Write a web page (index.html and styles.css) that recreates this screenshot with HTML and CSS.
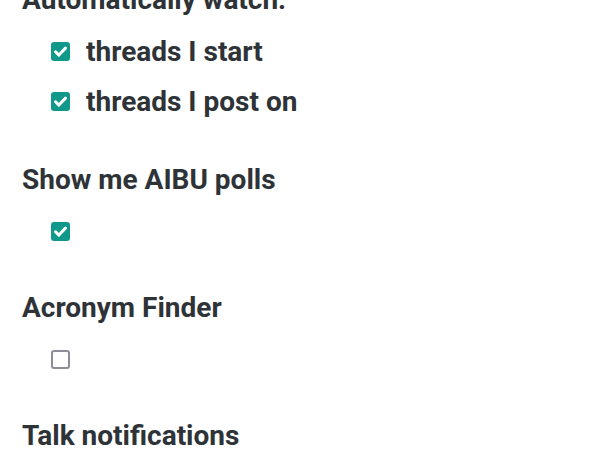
FILE: index.html
```html
<!DOCTYPE html>
<html lang="en">
<head>
  <meta charset="UTF-8">
  <meta name="viewport" content="width=device-width, initial-scale=1.0">
  <title>Preferences</title>
  <link rel="stylesheet" href="styles.css">
</head>
<body>
  <div class="prefs">
    <div class="pref">
      <h2 class="pref-title">Automatically watch:</h2>
      <label class="option">
        <input type="checkbox" checked>
        <span class="box"></span>
        <span class="option-text">threads I start</span>
      </label>
      <label class="option">
        <input type="checkbox" checked>
        <span class="box"></span>
        <span class="option-text">threads I post on</span>
      </label>
    </div>

    <div class="pref">
      <h2 class="pref-title">Show me AIBU polls</h2>
      <label class="option">
        <input type="checkbox" checked>
        <span class="box"></span>
      </label>
    </div>

    <div class="pref">
      <h2 class="pref-title">Acronym Finder</h2>
      <label class="option">
        <input type="checkbox">
        <span class="box"></span>
      </label>
    </div>

    <div class="pref">
      <h2 class="pref-title">Talk notifications</h2>
    </div>
  </div>
</body>
</html>
```

FILE: styles.css
```css
body {
  margin: 0;
  overflow: hidden;
  font-family: Roboto, "Liberation Sans", sans-serif;
  color: #2e3338;
  background: #fff;
}
.prefs {
  margin-top: -16px;
  padding: 0 22px;
}
.pref {
  margin-bottom: 36px;
}
.pref:first-child {
  margin-bottom: 38px;
}
.pref-title {
  margin: 0 0 10px;
  font-size: 28px;
  line-height: 32px;
  font-weight: 700;
}
.option {
  display: flex;
  align-items: center;
  gap: 16px;
  height: 50px;
  padding-left: 29px;
  font-size: 28px;
  font-weight: 700;
}
.option input {
  display: none;
}
.box {
  width: 19px;
  height: 19px;
  box-sizing: border-box;
  border: 2.5px solid #8e8c99;
  border-radius: 3px;
  background: #fff;
}
.option input:checked + .box {
  border-color: #10998a;
  background: #10998a url("data:image/svg+xml,%3Csvg xmlns='http://www.w3.org/2000/svg' viewBox='0 0 18 18'%3E%3Cpath d='M4.3 9.2l3.2 3.2 6.2-6.6' fill='none' stroke='white' stroke-width='2.8' stroke-linecap='round' stroke-linejoin='round'/%3E%3C/svg%3E") center / 19px 19px no-repeat;
}
```
